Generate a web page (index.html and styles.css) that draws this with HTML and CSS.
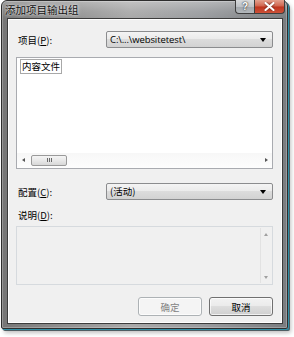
FILE: index.html
```html
<!DOCTYPE html>
<html lang="zh">
<head>
<meta charset="utf-8">
<link rel="stylesheet" href="styles.css">
</head>
<body>
<div class="window">
  <div class="titlebar">
    <span class="title">添加项目输出组</span>
    <div class="caption-buttons">
      <span class="cbtn help">?</span>
      <span class="cbtn close">
        <svg width="11" height="9" viewBox="0 0 11 9"><path d="M1.5 1 L9.5 8 M9.5 1 L1.5 8" stroke="#fff" stroke-width="2.2" stroke-linecap="round"/></svg>
      </span>
    </div>
  </div>
  <div class="client">
    <div class="row first">
      <span class="label">项目(<u>P</u>):</span>
      <div class="combo"><span class="combo-text latin">C:\...\websitetest\</span><span class="arrow"></span></div>
    </div>
    <div class="listbox">
      <div class="list-items">
        <span class="item">内容文件</span>
      </div>
      <div class="hscroll">
        <span class="sarrow left"></span>
        <span class="thumb"><span class="grip"></span></span>
        <span class="track"></span>
        <span class="sarrow right"></span>
      </div>
    </div>
    <div class="row second">
      <span class="label">配置(<u>C</u>):</span>
      <div class="combo"><span class="combo-text">(活动)</span><span class="arrow"></span></div>
    </div>
    <div class="desc-label label">说明(<u>D</u>):</div>
    <div class="descbox">
      <div class="desc-body"></div>
      <div class="vscroll">
        <span class="varrow up"></span>
        <span class="varrow down"></span>
      </div>
    </div>
    <div class="buttons">
      <span class="btn disabled">确定</span>
      <span class="btn">取消</span>
    </div>
  </div>
</div>
</body>
</html>
```

FILE: styles.css
```css
html, body {
  margin: 0;
  padding: 0;
  background: #ffffff;
}
body {
  width: 294px;
  height: 337px;
  overflow: hidden;
  font-family: "Noto Sans CJK SC", "Noto Sans", sans-serif;
  font-size: 9.5px;
  color: #000;
}
.window {
  width: 287px;
  height: 329px;
  margin-left: 1px;
  border: 1px solid #2e2e2e;
  border-radius: 6px 6px 2px 2px;
  background: linear-gradient(90deg, #767676 0%, #8e8e8e 20%, #a9a9a9 45%, #9a9c9f 70%, #7a7d80 100%);
  box-shadow: inset 0 0 0 1px rgba(255,255,255,0.25), 1px 1px 0 #2f8fa6, 2px 2px 0 #4f5e63, 3px 4px 4px rgba(0,0,0,0.25);
  display: flex;
  flex-direction: column;
  box-sizing: border-box;
  position: relative;
}
.titlebar {
  height: 17px;
  display: flex;
  align-items: flex-start;
  justify-content: space-between;
  background: linear-gradient(180deg, rgba(255,255,255,0.3) 0%, rgba(255,255,255,0.08) 60%, rgba(0,0,0,0) 100%);
  border-radius: 5px 5px 0 0;
}
.title {
  padding: 2px 0 0 3px;
  font-size: 10.5px;
  line-height: 14px;
  color: #111;
  text-shadow: 0 0 4px rgba(255,255,255,0.8), 0 0 2px rgba(255,255,255,0.7);
}
.caption-buttons {
  display: flex;
  margin-right: 2px;
  margin-top: -1px;
}
.cbtn {
  height: 14px;
  display: flex;
  align-items: center;
  justify-content: center;
  box-sizing: border-box;
  border: 1px solid #3e3e3e;
  border-top: none;
}
.help {
  width: 19px;
  border-radius: 0 0 0 4px;
  background: linear-gradient(180deg, #d8dadc 0%, #bfc3c7 50%, #a2a7ac 51%, #b3b8bc 100%);
  font-family: "Liberation Sans", sans-serif;
  font-weight: bold;
  font-size: 10px;
  color: #fff;
  text-shadow: 0 0 2px #333, 0 0 1px #333;
  border-right: none;
}
.close {
  width: 31px;
  border-radius: 0 0 4px 0;
  background: linear-gradient(180deg, #e3a08d 0%, #d0644d 48%, #be331c 52%, #cd5239 100%);
}
.close svg path { filter: drop-shadow(0 0 1px #5a1a10); }
.client {
  flex: 1;
  margin: 0 4px 4px 5px;
  background: #f0f0f0;
  border: 1px solid #3c3c3c;
  box-shadow: inset 0 0 0 1px #ffffff;
  padding: 12px 9px 0 9px;
  display: flex;
  flex-direction: column;
}
.row {
  display: flex;
  align-items: center;
  height: 17px;
}
.label {
  width: 88px;
  padding-left: 1px;
  white-space: nowrap;
}
.label u { text-decoration: underline; }
.combo {
  flex: 1;
  height: 17px;
  box-sizing: border-box;
  border: 1px solid #8b8c8e;
  border-radius: 2px;
  background: linear-gradient(180deg, #f4f4f4 0%, #ebebeb 45%, #dcdcdc 50%, #d2d2d2 100%);
  display: flex;
  align-items: center;
  justify-content: space-between;
  padding: 0 6px 0 3px;
}
.combo-text { line-height: 15px; }
.latin { font-family: "Open Sans", "Noto Sans", sans-serif; font-size: 9.5px; letter-spacing: -0.1px; }
.arrow {
  width: 0;
  height: 0;
  border-left: 3.5px solid transparent;
  border-right: 3.5px solid transparent;
  border-top: 4px solid #000;
}
.listbox {
  margin-top: 9px;
  margin-left: -1px;
  height: 112px;
  box-sizing: border-box;
  border: 1px solid #a9abb0;
  background: #fff;
  display: flex;
  flex-direction: column;
}
.list-items {
  flex: 1;
  padding: 1px 0 0 3px;
}
.item {
  display: inline-block;
  border: 1px solid #a8a8a8;
  padding: 0 1px;
  line-height: 13px;
  height: 13px;
}
.hscroll {
  height: 14px;
  display: flex;
  align-items: center;
  background: linear-gradient(180deg, #f7f7f7, #fdfdfd);
  padding: 0 4px 1px 5px;
}
.sarrow {
  width: 0;
  height: 0;
  border-top: 2.5px solid transparent;
  border-bottom: 2.5px solid transparent;
}
.sarrow.left { border-right: 3px solid #555; }
.sarrow.right { border-left: 3px solid #555; }
.thumb {
  margin-left: 6px;
  width: 36px;
  height: 11px;
  box-sizing: border-box;
  border: 1px solid #9a9a9a;
  border-radius: 2px;
  background: linear-gradient(180deg, #f5f5f5 0%, #e8e8e8 50%, #d8d8d8 100%);
  display: flex;
  align-items: center;
  justify-content: center;
}
.grip {
  width: 5px;
  height: 4px;
  background: repeating-linear-gradient(90deg, #6a6a6a 0 1px, transparent 1px 2px);
}
.track { flex: 1; }
.row.second { margin-top: 14px; }
.desc-label {
  margin-top: 9px;
  line-height: 13px;
}
.descbox {
  margin-top: 4px;
  margin-left: -1px;
  height: 59px;
  box-sizing: border-box;
  border: 1px solid #d6dade;
  background: #f0f0f0;
  display: flex;
}
.desc-body { flex: 1; }
.vscroll {
  width: 11px;
  margin: 1px 1px 1px 0;
  border-left: 1px solid #e2e2e2;
  display: flex;
  flex-direction: column;
  justify-content: space-between;
  align-items: center;
  padding: 5px 0 4px;
  box-sizing: border-box;
}
.varrow {
  width: 0;
  height: 0;
  border-left: 2.5px solid transparent;
  border-right: 2.5px solid transparent;
}
.varrow.up { border-bottom: 3px solid #a0a0a0; }
.varrow.down { border-top: 3px solid #a0a0a0; }
.buttons {
  margin-top: 12px;
  display: flex;
  justify-content: flex-end;
  gap: 7px;
}
.btn {
  width: 64px;
  height: 19px;
  box-sizing: border-box;
  border: 1px solid #707070;
  border-radius: 3px;
  background: linear-gradient(180deg, #f2f2f2 0%, #ebebeb 45%, #dddddd 50%, #cfcfcf 100%);
  display: flex;
  align-items: center;
  justify-content: center;
  box-shadow: inset 0 0 0 1px rgba(255,255,255,0.7);
}
.btn.disabled {
  border-color: #adb2b5;
  background: #f4f4f4;
  color: #838383;
}
```
